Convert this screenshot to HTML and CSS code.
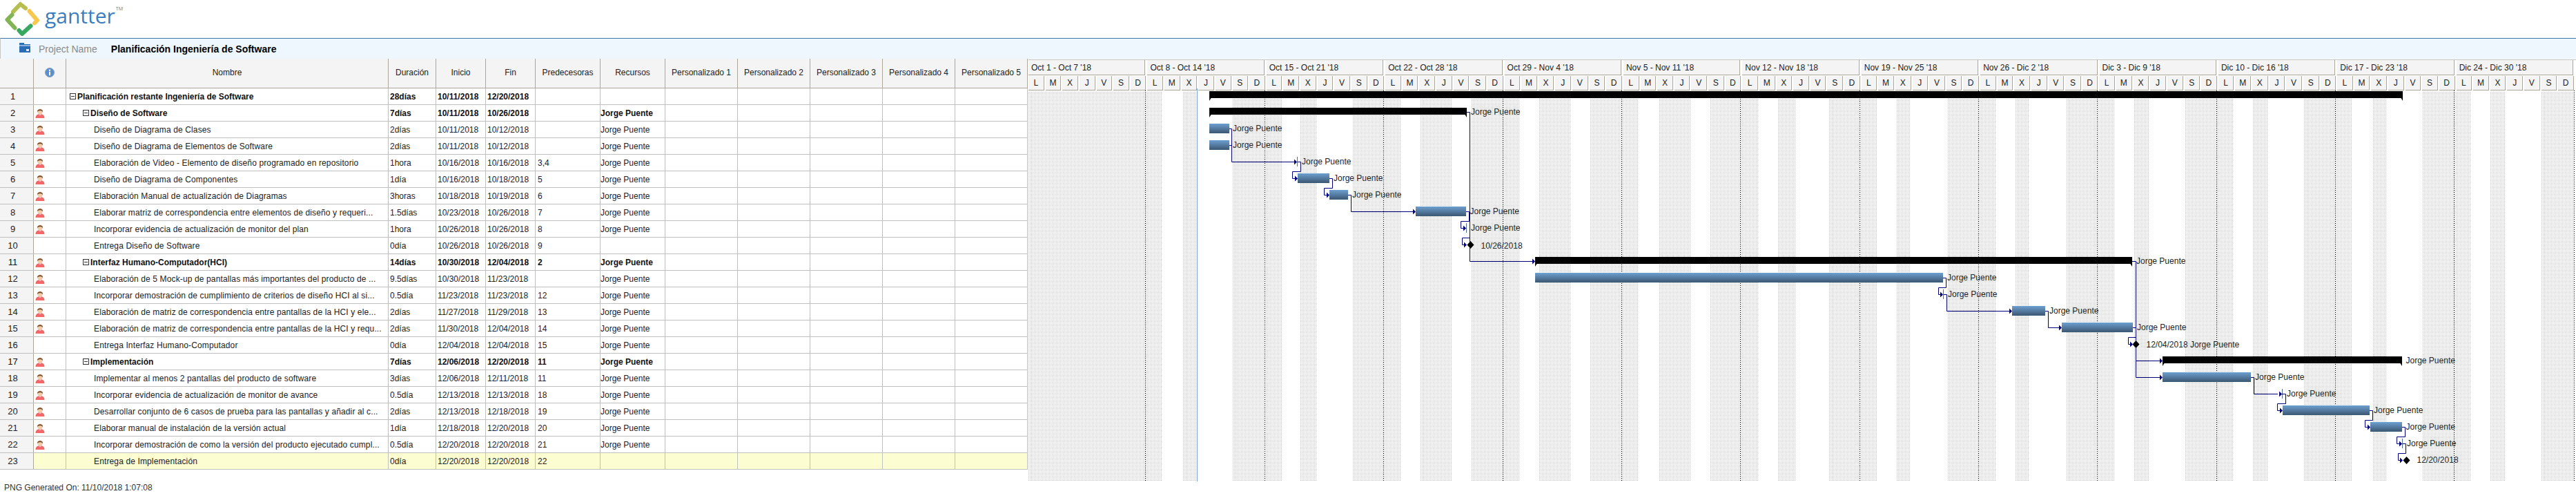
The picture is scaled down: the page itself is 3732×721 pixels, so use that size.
FILE: index.html
```html
<!DOCTYPE html>
<html lang="es">
<head>
    <meta charset="UTF-8">
    <title>Planificación Ingeniería de Software - Gantter</title>
    <link rel="stylesheet" href="styles.css">
</head>
<body>
    <svg class="defs" width="0" height="0">
        <symbol id="person" viewBox="0 0 14 14">
            <path d="M0.5 14 C0.5 10 3 8.6 5 8.2 L9 8.2 C11 8.6 13.5 10 13.5 14 Z" fill="#f0686a"/>
            <circle cx="7" cy="4.4" r="3.9" fill="#f4cdae"/>
            <path d="M3 4.8 C2.4 0 11.6 0 11 4.8 C9.8 3.4 8 3 6.4 3.2 C5 3.4 4 3.8 3 4.8 Z" fill="#7a4a2c"/>
            <path d="M5 8.4 L7 10.2 L9 8.4 Z" fill="#fbe3d8"/>
        </symbol>
    </svg>

    <header class="logo-bar">
        <svg class="logo" width="60" height="55" viewBox="0 0 60 55">
            <g fill="none" stroke-width="6" stroke-linejoin="round" stroke-linecap="round">
                <polyline points="19,17 29.5,6 37,12" stroke="#b6be50"/>
                <polyline points="42.5,16 54,29.5 50,33.5" stroke="#f6c84e"/>
                <polyline points="44.5,37.5 32,49 27.5,44" stroke="#37a860"/>
                <polyline points="17.5,21.5 10.5,28.5 21.5,40.5" stroke="#82b455"/>
            </g>
        </svg>
        <span class="brand">gantter<sup class="tm">TM</sup></span>
    </header>

    <div class="project-band">
        <svg class="folder" width="16" height="14" viewBox="0 0 16 14">
            <path d="M0 0 H7 V2 H16 V3.5 H0 Z M0 4.5 H16 V14 H0 Z" fill="#2a6db5"/>
            <rect x="10" y="9" width="4" height="3" fill="#dfe9f3"/>
        </svg>
        <span class="project-label">Project Name</span>
        <span class="project-title">Planificación Ingeniería de Software</span>
    </div>

    <main class="gantt">
        <section class="task-grid">
            <div class="row head">
                <div class="cell"></div>
                <div class="cell center">
                    <svg class="info" width="14" height="14" viewBox="0 0 14 14">
                        <circle cx="7" cy="7" r="6.5" fill="#5c8fcb" stroke="#7f9fc4"/>
                        <circle cx="7" cy="3.8" r="1.2" fill="#fff"/>
                        <rect x="6" y="5.8" width="2" height="5.4" fill="#fff"/>
                    </svg>
                </div>
                <div class="cell center">Nombre</div>
                <div class="cell center">Duración</div>
                <div class="cell center">Inicio</div>
                <div class="cell center">Fin</div>
                <div class="cell center">Predecesoras</div>
                <div class="cell center">Recursos</div>
                <div class="cell center">Personalizado 1</div>
                <div class="cell center">Personalizado 2</div>
                <div class="cell center">Personalizado 3</div>
                <div class="cell center">Personalizado 4</div>
                <div class="cell center">Personalizado 5</div>
            </div>

            <div class="row summary">
                <div class="cell num">1</div><div class="cell"></div>
                <div class="cell name level-0"><span class="toggle"></span>Planificación restante Ingeniería de Software</div>
                <div class="cell">28días</div><div class="cell">10/11/2018</div><div class="cell">12/20/2018</div>
                <div class="cell pred"></div><div class="cell res"></div>
                <div class="cell"></div><div class="cell"></div><div class="cell"></div><div class="cell"></div><div class="cell"></div>
            </div>
            <div class="row summary">
                <div class="cell num">2</div><div class="cell who"><svg width="14" height="14"><use href="#person"/></svg></div>
                <div class="cell name level-1"><span class="toggle"></span>Diseño de Software</div>
                <div class="cell">7días</div><div class="cell">10/11/2018</div><div class="cell">10/26/2018</div>
                <div class="cell pred"></div><div class="cell res">Jorge Puente</div>
                <div class="cell"></div><div class="cell"></div><div class="cell"></div><div class="cell"></div><div class="cell"></div>
            </div>
            <div class="row">
                <div class="cell num">3</div><div class="cell who"><svg width="14" height="14"><use href="#person"/></svg></div>
                <div class="cell name level-2">Diseño de Diagrama de Clases</div>
                <div class="cell">2días</div><div class="cell">10/11/2018</div><div class="cell">10/12/2018</div>
                <div class="cell pred"></div><div class="cell res">Jorge Puente</div>
                <div class="cell"></div><div class="cell"></div><div class="cell"></div><div class="cell"></div><div class="cell"></div>
            </div>
            <div class="row">
                <div class="cell num">4</div><div class="cell who"><svg width="14" height="14"><use href="#person"/></svg></div>
                <div class="cell name level-2">Diseño de Diagrama de Elementos de Software</div>
                <div class="cell">2días</div><div class="cell">10/11/2018</div><div class="cell">10/12/2018</div>
                <div class="cell pred"></div><div class="cell res">Jorge Puente</div>
                <div class="cell"></div><div class="cell"></div><div class="cell"></div><div class="cell"></div><div class="cell"></div>
            </div>
            <div class="row">
                <div class="cell num">5</div><div class="cell who"><svg width="14" height="14"><use href="#person"/></svg></div>
                <div class="cell name level-2">Elaboración de Video - Elemento de diseño programado en repositorio</div>
                <div class="cell">1hora</div><div class="cell">10/16/2018</div><div class="cell">10/16/2018</div>
                <div class="cell pred">3,4</div><div class="cell res">Jorge Puente</div>
                <div class="cell"></div><div class="cell"></div><div class="cell"></div><div class="cell"></div><div class="cell"></div>
            </div>
            <div class="row">
                <div class="cell num">6</div><div class="cell who"><svg width="14" height="14"><use href="#person"/></svg></div>
                <div class="cell name level-2">Diseño de Diagrama de Componentes</div>
                <div class="cell">1día</div><div class="cell">10/16/2018</div><div class="cell">10/18/2018</div>
                <div class="cell pred">5</div><div class="cell res">Jorge Puente</div>
                <div class="cell"></div><div class="cell"></div><div class="cell"></div><div class="cell"></div><div class="cell"></div>
            </div>
            <div class="row">
                <div class="cell num">7</div><div class="cell who"><svg width="14" height="14"><use href="#person"/></svg></div>
                <div class="cell name level-2">Elaboración Manual de actualización de Diagramas</div>
                <div class="cell">3horas</div><div class="cell">10/18/2018</div><div class="cell">10/19/2018</div>
                <div class="cell pred">6</div><div class="cell res">Jorge Puente</div>
                <div class="cell"></div><div class="cell"></div><div class="cell"></div><div class="cell"></div><div class="cell"></div>
            </div>
            <div class="row">
                <div class="cell num">8</div><div class="cell who"><svg width="14" height="14"><use href="#person"/></svg></div>
                <div class="cell name level-2">Elaborar matriz de correspondencia entre elementos de diseño y requeri...</div>
                <div class="cell">1.5días</div><div class="cell">10/23/2018</div><div class="cell">10/26/2018</div>
                <div class="cell pred">7</div><div class="cell res">Jorge Puente</div>
                <div class="cell"></div><div class="cell"></div><div class="cell"></div><div class="cell"></div><div class="cell"></div>
            </div>
            <div class="row">
                <div class="cell num">9</div><div class="cell who"><svg width="14" height="14"><use href="#person"/></svg></div>
                <div class="cell name level-2">Incorporar evidencia de actualización de monitor del plan</div>
                <div class="cell">1hora</div><div class="cell">10/26/2018</div><div class="cell">10/26/2018</div>
                <div class="cell pred">8</div><div class="cell res">Jorge Puente</div>
                <div class="cell"></div><div class="cell"></div><div class="cell"></div><div class="cell"></div><div class="cell"></div>
            </div>
            <div class="row">
                <div class="cell num">10</div><div class="cell"></div>
                <div class="cell name level-2">Entrega Diseño de Software</div>
                <div class="cell">0día</div><div class="cell">10/26/2018</div><div class="cell">10/26/2018</div>
                <div class="cell pred">9</div><div class="cell res"></div>
                <div class="cell"></div><div class="cell"></div><div class="cell"></div><div class="cell"></div><div class="cell"></div>
            </div>
            <div class="row summary">
                <div class="cell num">11</div><div class="cell who"><svg width="14" height="14"><use href="#person"/></svg></div>
                <div class="cell name level-1"><span class="toggle"></span>Interfaz Humano-Computador(HCI)</div>
                <div class="cell">14días</div><div class="cell">10/30/2018</div><div class="cell">12/04/2018</div>
                <div class="cell pred">2</div><div class="cell res">Jorge Puente</div>
                <div class="cell"></div><div class="cell"></div><div class="cell"></div><div class="cell"></div><div class="cell"></div>
            </div>
            <div class="row">
                <div class="cell num">12</div><div class="cell who"><svg width="14" height="14"><use href="#person"/></svg></div>
                <div class="cell name level-2">Elaboración de 5 Mock-up de pantallas más importantes del producto de ...</div>
                <div class="cell">9.5días</div><div class="cell">10/30/2018</div><div class="cell">11/23/2018</div>
                <div class="cell pred"></div><div class="cell res">Jorge Puente</div>
                <div class="cell"></div><div class="cell"></div><div class="cell"></div><div class="cell"></div><div class="cell"></div>
            </div>
            <div class="row">
                <div class="cell num">13</div><div class="cell who"><svg width="14" height="14"><use href="#person"/></svg></div>
                <div class="cell name level-2">Incorporar demostración de cumplimiento de criterios de diseño HCI al si...</div>
                <div class="cell">0.5día</div><div class="cell">11/23/2018</div><div class="cell">11/23/2018</div>
                <div class="cell pred">12</div><div class="cell res">Jorge Puente</div>
                <div class="cell"></div><div class="cell"></div><div class="cell"></div><div class="cell"></div><div class="cell"></div>
            </div>
            <div class="row">
                <div class="cell num">14</div><div class="cell who"><svg width="14" height="14"><use href="#person"/></svg></div>
                <div class="cell name level-2">Elaboración de matriz de correspondencia entre pantallas de la HCI y ele...</div>
                <div class="cell">2días</div><div class="cell">11/27/2018</div><div class="cell">11/29/2018</div>
                <div class="cell pred">13</div><div class="cell res">Jorge Puente</div>
                <div class="cell"></div><div class="cell"></div><div class="cell"></div><div class="cell"></div><div class="cell"></div>
            </div>
            <div class="row">
                <div class="cell num">15</div><div class="cell who"><svg width="14" height="14"><use href="#person"/></svg></div>
                <div class="cell name level-2">Elaboración de matriz de correspondencia entre pantallas de la HCI y requ...</div>
                <div class="cell">2días</div><div class="cell">11/30/2018</div><div class="cell">12/04/2018</div>
                <div class="cell pred">14</div><div class="cell res">Jorge Puente</div>
                <div class="cell"></div><div class="cell"></div><div class="cell"></div><div class="cell"></div><div class="cell"></div>
            </div>
            <div class="row">
                <div class="cell num">16</div><div class="cell"></div>
                <div class="cell name level-2">Entrega Interfaz Humano-Computador</div>
                <div class="cell">0día</div><div class="cell">12/04/2018</div><div class="cell">12/04/2018</div>
                <div class="cell pred">15</div><div class="cell res">Jorge Puente</div>
                <div class="cell"></div><div class="cell"></div><div class="cell"></div><div class="cell"></div><div class="cell"></div>
            </div>
            <div class="row summary">
                <div class="cell num">17</div><div class="cell who"><svg width="14" height="14"><use href="#person"/></svg></div>
                <div class="cell name level-1"><span class="toggle"></span>Implementación</div>
                <div class="cell">7días</div><div class="cell">12/06/2018</div><div class="cell">12/20/2018</div>
                <div class="cell pred">11</div><div class="cell res">Jorge Puente</div>
                <div class="cell"></div><div class="cell"></div><div class="cell"></div><div class="cell"></div><div class="cell"></div>
            </div>
            <div class="row">
                <div class="cell num">18</div><div class="cell who"><svg width="14" height="14"><use href="#person"/></svg></div>
                <div class="cell name level-2">Implementar al menos 2 pantallas del producto de software</div>
                <div class="cell">3días</div><div class="cell">12/06/2018</div><div class="cell">12/11/2018</div>
                <div class="cell pred">11</div><div class="cell res">Jorge Puente</div>
                <div class="cell"></div><div class="cell"></div><div class="cell"></div><div class="cell"></div><div class="cell"></div>
            </div>
            <div class="row">
                <div class="cell num">19</div><div class="cell who"><svg width="14" height="14"><use href="#person"/></svg></div>
                <div class="cell name level-2">Incorporar evidencia de actualización de monitor de avance</div>
                <div class="cell">0.5día</div><div class="cell">12/13/2018</div><div class="cell">12/13/2018</div>
                <div class="cell pred">18</div><div class="cell res">Jorge Puente</div>
                <div class="cell"></div><div class="cell"></div><div class="cell"></div><div class="cell"></div><div class="cell"></div>
            </div>
            <div class="row">
                <div class="cell num">20</div><div class="cell who"><svg width="14" height="14"><use href="#person"/></svg></div>
                <div class="cell name level-2">Desarrollar conjunto de 6 casos de prueba para las pantallas y añadir al c...</div>
                <div class="cell">2días</div><div class="cell">12/13/2018</div><div class="cell">12/18/2018</div>
                <div class="cell pred">19</div><div class="cell res">Jorge Puente</div>
                <div class="cell"></div><div class="cell"></div><div class="cell"></div><div class="cell"></div><div class="cell"></div>
            </div>
            <div class="row">
                <div class="cell num">21</div><div class="cell who"><svg width="14" height="14"><use href="#person"/></svg></div>
                <div class="cell name level-2">Elaborar manual de instalación de la versión actual</div>
                <div class="cell">1día</div><div class="cell">12/18/2018</div><div class="cell">12/20/2018</div>
                <div class="cell pred">20</div><div class="cell res">Jorge Puente</div>
                <div class="cell"></div><div class="cell"></div><div class="cell"></div><div class="cell"></div><div class="cell"></div>
            </div>
            <div class="row">
                <div class="cell num">22</div><div class="cell who"><svg width="14" height="14"><use href="#person"/></svg></div>
                <div class="cell name level-2">Incorporar demostración de como la versión del producto ejecutado cumpl...</div>
                <div class="cell">0.5día</div><div class="cell">12/20/2018</div><div class="cell">12/20/2018</div>
                <div class="cell pred">21</div><div class="cell res">Jorge Puente</div>
                <div class="cell"></div><div class="cell"></div><div class="cell"></div><div class="cell"></div><div class="cell"></div>
            </div>
            <div class="row selected">
                <div class="cell num">23</div><div class="cell"></div>
                <div class="cell name level-2">Entrega de Implementación</div>
                <div class="cell">0día</div><div class="cell">12/20/2018</div><div class="cell">12/20/2018</div>
                <div class="cell pred">22</div><div class="cell res"></div>
                <div class="cell"></div><div class="cell"></div><div class="cell"></div><div class="cell"></div><div class="cell"></div>
            </div>
        </section>

        <section class="chart">
            <div class="weeks">
                <div>Oct 1 - Oct 7 '18</div><div>Oct 8 - Oct 14 '18</div><div>Oct 15 - Oct 21 '18</div><div>Oct 22 - Oct 28 '18</div>
                <div>Oct 29 - Nov 4 '18</div><div>Nov 5 - Nov 11 '18</div><div>Nov 12 - Nov 18 '18</div><div>Nov 19 - Nov 25 '18</div>
                <div>Nov 26 - Dic 2 '18</div><div>Dic 3 - Dic 9 '18</div><div>Dic 10 - Dic 16 '18</div><div>Dic 17 - Dic 23 '18</div><div>Dic 24 - Dic 30 '18</div>
            </div>
            <div class="days">
                <div>L</div><div>M</div><div>X</div><div>J</div><div>V</div><div>S</div><div>D</div>
                <div>L</div><div>M</div><div>X</div><div>J</div><div>V</div><div>S</div><div>D</div>
                <div>L</div><div>M</div><div>X</div><div>J</div><div>V</div><div>S</div><div>D</div>
                <div>L</div><div>M</div><div>X</div><div>J</div><div>V</div><div>S</div><div>D</div>
                <div>L</div><div>M</div><div>X</div><div>J</div><div>V</div><div>S</div><div>D</div>
                <div>L</div><div>M</div><div>X</div><div>J</div><div>V</div><div>S</div><div>D</div>
                <div>L</div><div>M</div><div>X</div><div>J</div><div>V</div><div>S</div><div>D</div>
                <div>L</div><div>M</div><div>X</div><div>J</div><div>V</div><div>S</div><div>D</div>
                <div>L</div><div>M</div><div>X</div><div>J</div><div>V</div><div>S</div><div>D</div>
                <div>L</div><div>M</div><div>X</div><div>J</div><div>V</div><div>S</div><div>D</div>
                <div>L</div><div>M</div><div>X</div><div>J</div><div>V</div><div>S</div><div>D</div>
                <div>L</div><div>M</div><div>X</div><div>J</div><div>V</div><div>S</div><div>D</div>
                <div>L</div><div>M</div><div>X</div><div>J</div><div>V</div><div>S</div><div>D</div>
            </div>

            <!-- viewBox uses page coordinates so bars can be read straight off the screenshot -->
            <svg class="canvas" width="2243" height="566" viewBox="1489 130 2243 566">
                <defs>
                    <pattern id="dots" width="2" height="2" patternUnits="userSpaceOnUse">
                        <rect width="1" height="1" fill="#bdbdbd"/>
                    </pattern>
                    <linearGradient id="barfill" x1="0" y1="0" x2="0" y2="1">
                        <stop offset="0" stop-color="#6e9fd0"/>
                        <stop offset="1" stop-color="#3c5872"/>
                    </linearGradient>
                </defs>

                <g fill="url(#dots)">
                    <rect x="1490" y="132" width="194" height="564"/>
                    <rect x="1713" y="132" width="21" height="564"/>
                    <rect x="1786" y="132" width="72" height="564"/>
                    <rect x="1884" y="132" width="23" height="564"/>
                    <rect x="1959" y="132" width="70" height="564"/>
                    <rect x="2057" y="132" width="46" height="564"/>
                    <rect x="2132" y="132" width="70" height="564"/>
                    <rect x="2229" y="132" width="47" height="564"/>
                    <rect x="2304" y="132" width="70" height="564"/>
                    <rect x="2403" y="132" width="46" height="564"/>
                    <rect x="2477" y="132" width="70" height="564"/>
                    <rect x="2575" y="132" width="26" height="564"/>
                    <rect x="2649" y="132" width="71" height="564"/>
                    <rect x="2748" y="132" width="19" height="564"/>
                    <rect x="2822" y="132" width="69" height="564"/>
                    <rect x="2919" y="132" width="21" height="564"/>
                    <rect x="2993" y="132" width="71" height="564"/>
                    <rect x="3092" y="132" width="21" height="564"/>
                    <rect x="3166" y="132" width="70" height="564"/>
                    <rect x="3264" y="132" width="22" height="564"/>
                    <rect x="3338" y="132" width="70" height="564"/>
                    <rect x="3437" y="132" width="21" height="564"/>
                    <rect x="3509" y="132" width="70" height="564"/>
                    <rect x="3608" y="132" width="21" height="564"/>
                    <rect x="3682" y="132" width="47" height="564"/>
                </g>

                <g class="week-lines">
                    <path d="M1659.5 130 V696 M1832.5 130 V696 M2004.5 130 V696 M2177.5 130 V696 M2349.5 130 V696 M2521.5 130 V696 M2694.5 130 V696 M2866.5 130 V696 M3038.5 130 V696 M3211.5 130 V696 M3383.5 130 V696 M3555.5 130 V696 M3729.5 130 V696"/>
                </g>
                <path class="today" d="M1734.5 127 V696"/>

                <!-- summary bars -->
                <g class="summary-bar">
                    <path d="M1752 131 H3481 V145 L3478.5 141 H1754.5 L1752 145 Z"/>
                    <path d="M1752 155 H2125 V169 L2122.5 165 H1754.5 L1752 169 Z"/>
                    <path d="M2224 371 H3089 V385 L3086.5 381 H2226.5 L2224 385 Z"/>
                    <path d="M3133 515 H3480 V529 L3477.5 525 H3135.5 L3133 529 Z"/>
                </g>

                <!-- task bars -->
                <g fill="url(#barfill)">
                    <rect x="1752" y="178" width="29" height="14"/>
                    <rect x="1752" y="202" width="29" height="14"/>
                    <rect x="1880" y="250" width="46" height="14"/>
                    <rect x="1926" y="274" width="27" height="14"/>
                    <rect x="2051" y="298" width="73" height="14"/>
                    <rect x="2224" y="394" width="591" height="14"/>
                    <rect x="2915" y="442" width="48" height="14"/>
                    <rect x="2987" y="466" width="103" height="14"/>
                    <rect x="3133" y="538" width="128" height="14"/>
                    <rect x="3307" y="586" width="126" height="14"/>
                    <rect x="3434" y="610" width="46" height="14"/>
                </g>

                <!-- very short tasks show up as a thin mark -->
                <path class="tick" d="M1879.5 226 V240 M2124.5 322 V336 M2815.5 418 V432 M3306.5 562 V576 M3480.5 634 V648"/>

                <g class="links">
                    <path d="M1781 185.5 H1784.5 V233.5 H1876 M1781 209.5 H1784.5"/>
                    <path d="M1880 233.5 H1884.5 V247.5 H1872.5 V257.5 H1877"/>
                    <path d="M1926 257.5 H1930.5 V271.5 H1918.5 V281.5 H1923"/>
                    <path d="M1953 281.5 H1957.5 V305.5 H2047"/>
                    <path d="M2124 305.5 H2128.5 V319.5 H2116.5 V329.5 H2121"/>
                    <path d="M2125 161.5 H2129.5 V377.5 H2220"/>
                    <path d="M2129 343.5 H2118.5 V353.5 H2122"/>
                    <path d="M2815 401.5 H2819.5 V415.5 H2808.5 V425.5 H2812"/>
                    <path d="M2816 425.5 H2820.5 V449.5 H2911"/>
                    <path d="M2963 449.5 H2967.5 V473.5 H2983"/>
                    <path d="M3090 473.5 H3094 M3094 487.5 H3083.5 V497.5 H3087"/>
                    <path d="M3089 377.5 H3094.5 V545.5 H3129 M3094 521.5 H3129"/>
                    <path d="M3261 545.5 H3265.5 V569.5 H3300"/>
                    <path d="M3306 569.5 H3311.5 V583.5 H3299.5 V593.5 H3303"/>
                    <path d="M3433 593.5 H3437.5 V607.5 H3426.5 V617.5 H3430"/>
                    <path d="M3480 617.5 H3484.5 V631.5 H3472.5 V641.5 H3476"/>
                    <path d="M3481 641.5 H3485.5 V655.5 H3474.5 V665.5 H3478"/>
                </g>
                <g class="arrows">
                    <polygon points="1875,229.5 1879,233.5 1875,237.5"/>
                    <polygon points="1876,253.5 1880,257.5 1876,261.5"/>
                    <polygon points="1922,277.5 1926,281.5 1922,285.5"/>
                    <polygon points="2047,301.5 2051,305.5 2047,309.5"/>
                    <polygon points="2120,325.5 2124,329.5 2120,333.5"/>
                    <polygon points="2121,349.5 2125,353.5 2121,357.5"/>
                    <polygon points="2220,373.5 2224,377.5 2220,381.5"/>
                    <polygon points="2811,421.5 2815,425.5 2811,429.5"/>
                    <polygon points="2911,445.5 2915,449.5 2911,453.5"/>
                    <polygon points="2983,469.5 2987,473.5 2983,477.5"/>
                    <polygon points="3086,493.5 3090,497.5 3086,501.5"/>
                    <polygon points="3129,517.5 3133,521.5 3129,525.5"/>
                    <polygon points="3129,541.5 3133,545.5 3129,549.5"/>
                    <polygon points="3302,565.5 3306,569.5 3302,573.5"/>
                    <polygon points="3303,589.5 3307,593.5 3303,597.5"/>
                    <polygon points="3430,613.5 3434,617.5 3430,621.5"/>
                    <polygon points="3476,637.5 3480,641.5 3476,645.5"/>
                    <polygon points="3477,661.5 3481,665.5 3477,669.5"/>
                </g>

                <g class="milestone">
                    <polygon points="2130.5,348 2135.5,353.5 2130.5,359 2125.5,353.5"/>
                    <polygon points="3094.5,492 3099.5,497.5 3094.5,503 3089.5,497.5"/>
                    <polygon points="3486.5,660 3491.5,665.5 3486.5,671 3481.5,665.5"/>
                </g>

                <g class="bar-label">
                    <text x="2131" y="165">Jorge Puente</text>
                    <text x="1786" y="189">Jorge Puente</text>
                    <text x="1786" y="213">Jorge Puente</text>
                    <text x="1886" y="237">Jorge Puente</text>
                    <text x="1932" y="261">Jorge Puente</text>
                    <text x="1959" y="285">Jorge Puente</text>
                    <text x="2129.5" y="309">Jorge Puente</text>
                    <text x="2131" y="333">Jorge Puente</text>
                    <text x="2145.5" y="359">10/26/2018</text>
                    <text x="3095" y="381">Jorge Puente</text>
                    <text x="2821" y="405">Jorge Puente</text>
                    <text x="2822" y="429">Jorge Puente</text>
                    <text x="2969" y="453">Jorge Puente</text>
                    <text x="3096" y="477">Jorge Puente</text>
                    <text x="3109.5" y="502">12/04/2018 Jorge Puente</text>
                    <text x="3485.5" y="525">Jorge Puente</text>
                    <text x="3267" y="549">Jorge Puente</text>
                    <text x="3313" y="573">Jorge Puente</text>
                    <text x="3439" y="597">Jorge Puente</text>
                    <text x="3485.5" y="621">Jorge Puente</text>
                    <text x="3487" y="645">Jorge Puente</text>
                    <text x="3501.5" y="669">12/20/2018</text>
                </g>
            </svg>
        </section>
    </main>

    <footer class="generated">PNG Generated On: 11/10/2018 1:07:08</footer>
</body>
</html>
```

FILE: styles.css
```css
* {
    box-sizing: border-box;
}
html, body {
    margin: 0;
    padding: 0;
    background: #fff;
}
body {
    width: 3732px;
    height: 721px;
    overflow: hidden;
    font-family: "Liberation Sans", Arial, sans-serif;
    font-size: 12px;
    color: #222;
}
.defs {
    position: absolute;
}

/* logo */
.logo-bar {
    height: 55px;
    display: flex;
    align-items: flex-start;
}
.logo {
    flex: none;
}
.brand {
    margin: 3px 0 0 5px;
    font-family: "Open Sans", sans-serif;
    font-size: 30px;
    line-height: 40px;
    color: #3b7dbf;
}
.tm {
    margin-left: 1px;
    font-size: 7px;
    line-height: 0;
    color: #777;
    vertical-align: 19px;
}

/* project name */
.project-band {
    height: 30px;
    display: flex;
    align-items: center;
    padding-left: 28px;
    background: #eef6fe;
    border-top: 1px solid #3f75a5;
    border-left: 1px solid #c5c5c5;
}
.folder {
    margin-top: -3px;
    margin-left: -1px;
}
.project-label {
    margin-left: 12px;
    font-size: 14px;
    color: #8a8a8a;
}
.project-title {
    margin-left: 20px;
    font-size: 14px;
    font-weight: bold;
    color: #000;
}

.gantt {
    display: flex;
    height: 611px;
}

/* task table */
.task-grid {
    width: 1489px;
    flex: none;
}
.row {
    display: grid;
    grid-template-columns: 49px 47px 467px 69px 72px 72px 94px 94px 105px 105px 105px 105px 105px;
    height: 24px;
    border-bottom: 1px solid #c0c0c0;
}
.cell {
    display: flex;
    align-items: center;
    padding-left: 2px;
    border-right: 1px solid #c0c0c0;
    white-space: nowrap;
    overflow: hidden;
}
.row.head {
    height: 43px;
    background: #f4f4f4;
    border-bottom: 1px solid #aca899;
    color: #222;
}
.row.head .cell {
    border-right-color: #aca899;
    padding: 0 0 2px;
}
.center {
    justify-content: center;
}
.row.summary {
    font-weight: bold;
    color: #111;
}
.row.selected {
    background: #fdfdd2;
}
.num {
    justify-content: center;
    padding: 0 11px 0 0;
    background: #f4f4f4;
    border-right-color: #aca899;
    font-size: 13px;
}
.row.summary .num {
    font-weight: normal;
}
.who {
    padding-left: 2px;
    padding-top: 1px;
}
.level-0 {
    padding-left: 5px;
}
.level-1 {
    padding-left: 24px;
}
.level-2 {
    padding-left: 40px;
    letter-spacing: 0.13px;
}
.toggle {
    position: relative;
    width: 9px;
    height: 9px;
    margin-right: 2px;
    border: 1px solid #333;
    background: #fff;
}
.toggle::after {
    content: "";
    position: absolute;
    left: 1px;
    top: 3px;
    width: 5px;
    height: 1px;
    background: #333;
}
.pred {
    padding-left: 3px;
}
.res {
    padding-left: 0;
}

/* timeline */
.chart {
    position: relative;
    flex: 1;
    min-width: 0;
}
.weeks {
    display: grid;
    grid-template-columns: repeat(13, 172.4px);
    height: 23px;
    margin-left: 1px;
    margin-top: 1px;
    border-top: 1px solid #c5c5c5;
}
.weeks div {
    display: flex;
    align-items: center;
    margin-right: 3px;
    padding-left: 4px;
    background: #f4f4f4;
    border-right: 1px solid #aca899;
    border-bottom: 1px solid #aca899;
    white-space: nowrap;
}
.days {
    display: grid;
    grid-template-columns: repeat(91, 24.63px);
    height: 21px;
    margin: 1px 0 0 1px;
}
.days div {
    display: flex;
    align-items: center;
    justify-content: center;
    margin-right: 2px;
    background: #f4f4f4;
    border-right: 1px solid #aca899;
    border-bottom: 1px solid #aca899;
}
.canvas {
    display: block;
    overflow: visible;
}
.week-lines path {
    fill: none;
    stroke: #000;
    stroke-width: 1;
    stroke-dasharray: 1 2;
    shape-rendering: crispEdges;
}
.today {
    fill: none;
    stroke: #7fa9d6;
    stroke-width: 1;
    shape-rendering: crispEdges;
}
.summary-bar path {
    fill: #000;
}
.tick {
    fill: none;
    stroke: #4f7096;
    stroke-width: 1;
    shape-rendering: crispEdges;
}
.links path {
    fill: none;
    stroke: #000080;
    stroke-width: 1;
}
.arrows polygon {
    fill: #000080;
}
.milestone polygon {
    fill: #000;
}
.bar-label text {
    font-family: "Liberation Sans", Arial, sans-serif;
    font-size: 12px;
    fill: #222;
}

.generated {
    height: 20px;
    padding-left: 6px;
    line-height: 20px;
    color: #333;
}
```
